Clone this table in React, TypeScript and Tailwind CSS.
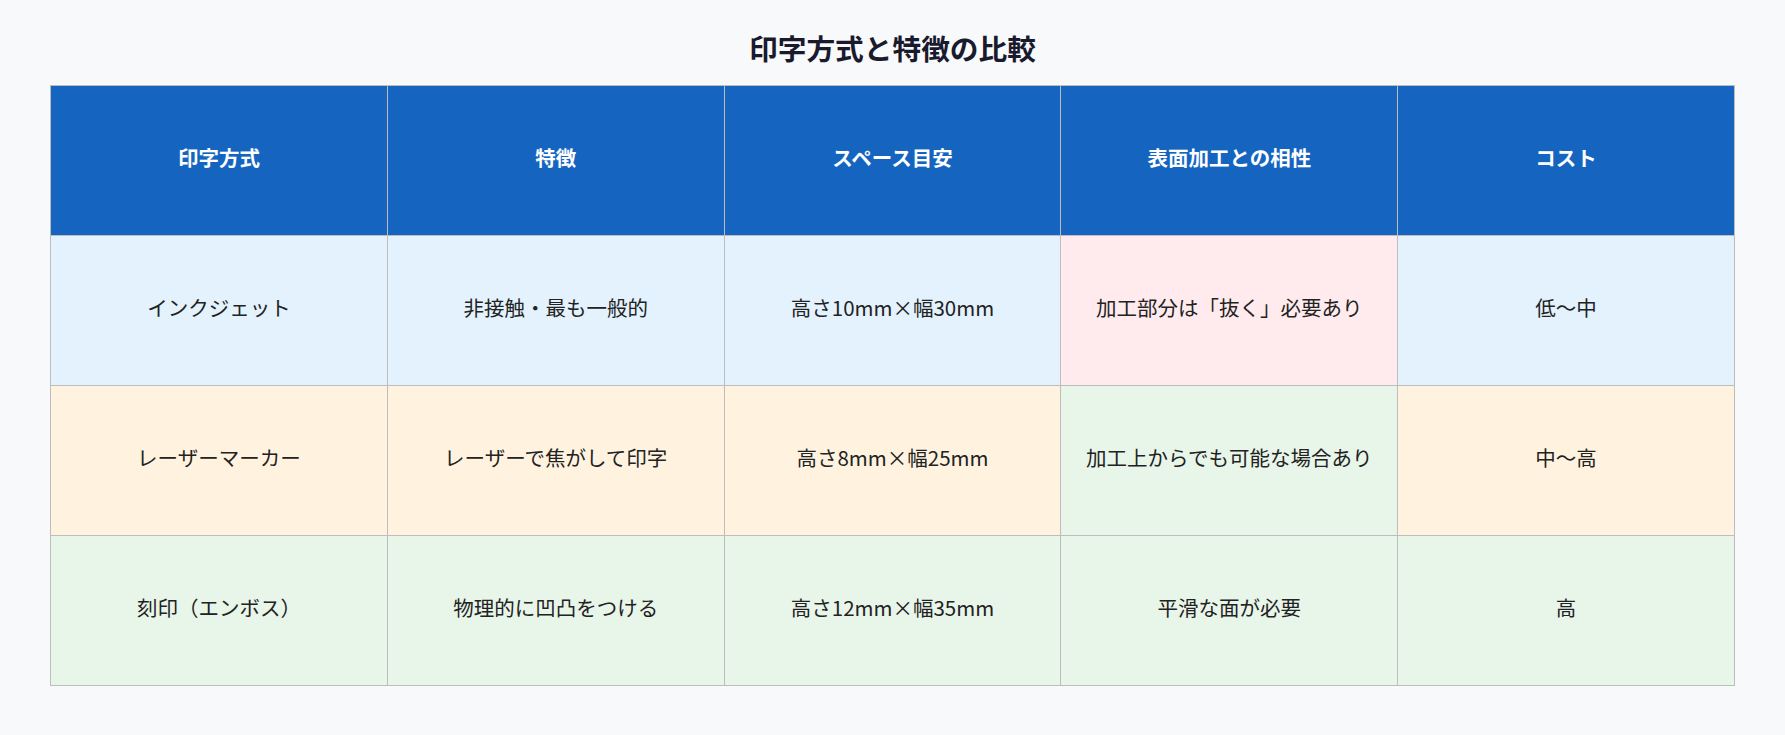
const headers = ["印字方式", "特徴", "スペース目安", "表面加工との相性", "コスト"];

type Cell = { text: string; bg: string };

const rows: Cell[][] = [
  [
    { text: "インクジェット", bg: "bg-[#e3f2fd]" },
    { text: "非接触・最も一般的", bg: "bg-[#e3f2fd]" },
    { text: "高さ10mm×幅30mm", bg: "bg-[#e3f2fd]" },
    { text: "加工部分は「抜く」必要あり", bg: "bg-[#ffebee]" },
    { text: "低〜中", bg: "bg-[#e3f2fd]" },
  ],
  [
    { text: "レーザーマーカー", bg: "bg-[#fff3e0]" },
    { text: "レーザーで焦がして印字", bg: "bg-[#fff3e0]" },
    { text: "高さ8mm×幅25mm", bg: "bg-[#fff3e0]" },
    { text: "加工上からでも可能な場合あり", bg: "bg-[#e8f5e9]" },
    { text: "中〜高", bg: "bg-[#fff3e0]" },
  ],
  [
    { text: "刻印（エンボス）", bg: "bg-[#e8f5e9]" },
    { text: "物理的に凹凸をつける", bg: "bg-[#e8f5e9]" },
    { text: "高さ12mm×幅35mm", bg: "bg-[#e8f5e9]" },
    { text: "平滑な面が必要", bg: "bg-[#e8f5e9]" },
    { text: "高", bg: "bg-[#e8f5e9]" },
  ],
];

export default function App() {
  return (
    <div className="min-h-[735px] bg-[#f8f9fa] px-[50px] pt-[30px] pb-[50px] font-['Noto_Sans_CJK_JP',sans-serif]">
      <h1 className="mb-[19px] text-center text-[28.7px] leading-[36px] font-bold text-[#1a1a2e]">
        印字方式と特徴の比較
      </h1>
      <table className="w-full table-fixed border-collapse text-[20.5px]">
        <thead>
          <tr className="h-[150px]">
            {headers.map((h) => (
              <th
                key={h}
                className="border border-[#bdbdbd] bg-[#1565c0] pb-[7px] text-center font-bold text-white"
              >
                {h}
              </th>
            ))}
          </tr>
        </thead>
        <tbody>
          {rows.map((row, i) => (
            <tr key={i} className="h-[150px]">
              {row.map((c, j) => (
                <td
                  key={j}
                  className={`border border-[#bdbdbd] pb-[7px] text-center text-[#222] ${c.bg}`}
                >
                  {c.text}
                </td>
              ))}
            </tr>
          ))}
        </tbody>
      </table>
    </div>
  );
}
